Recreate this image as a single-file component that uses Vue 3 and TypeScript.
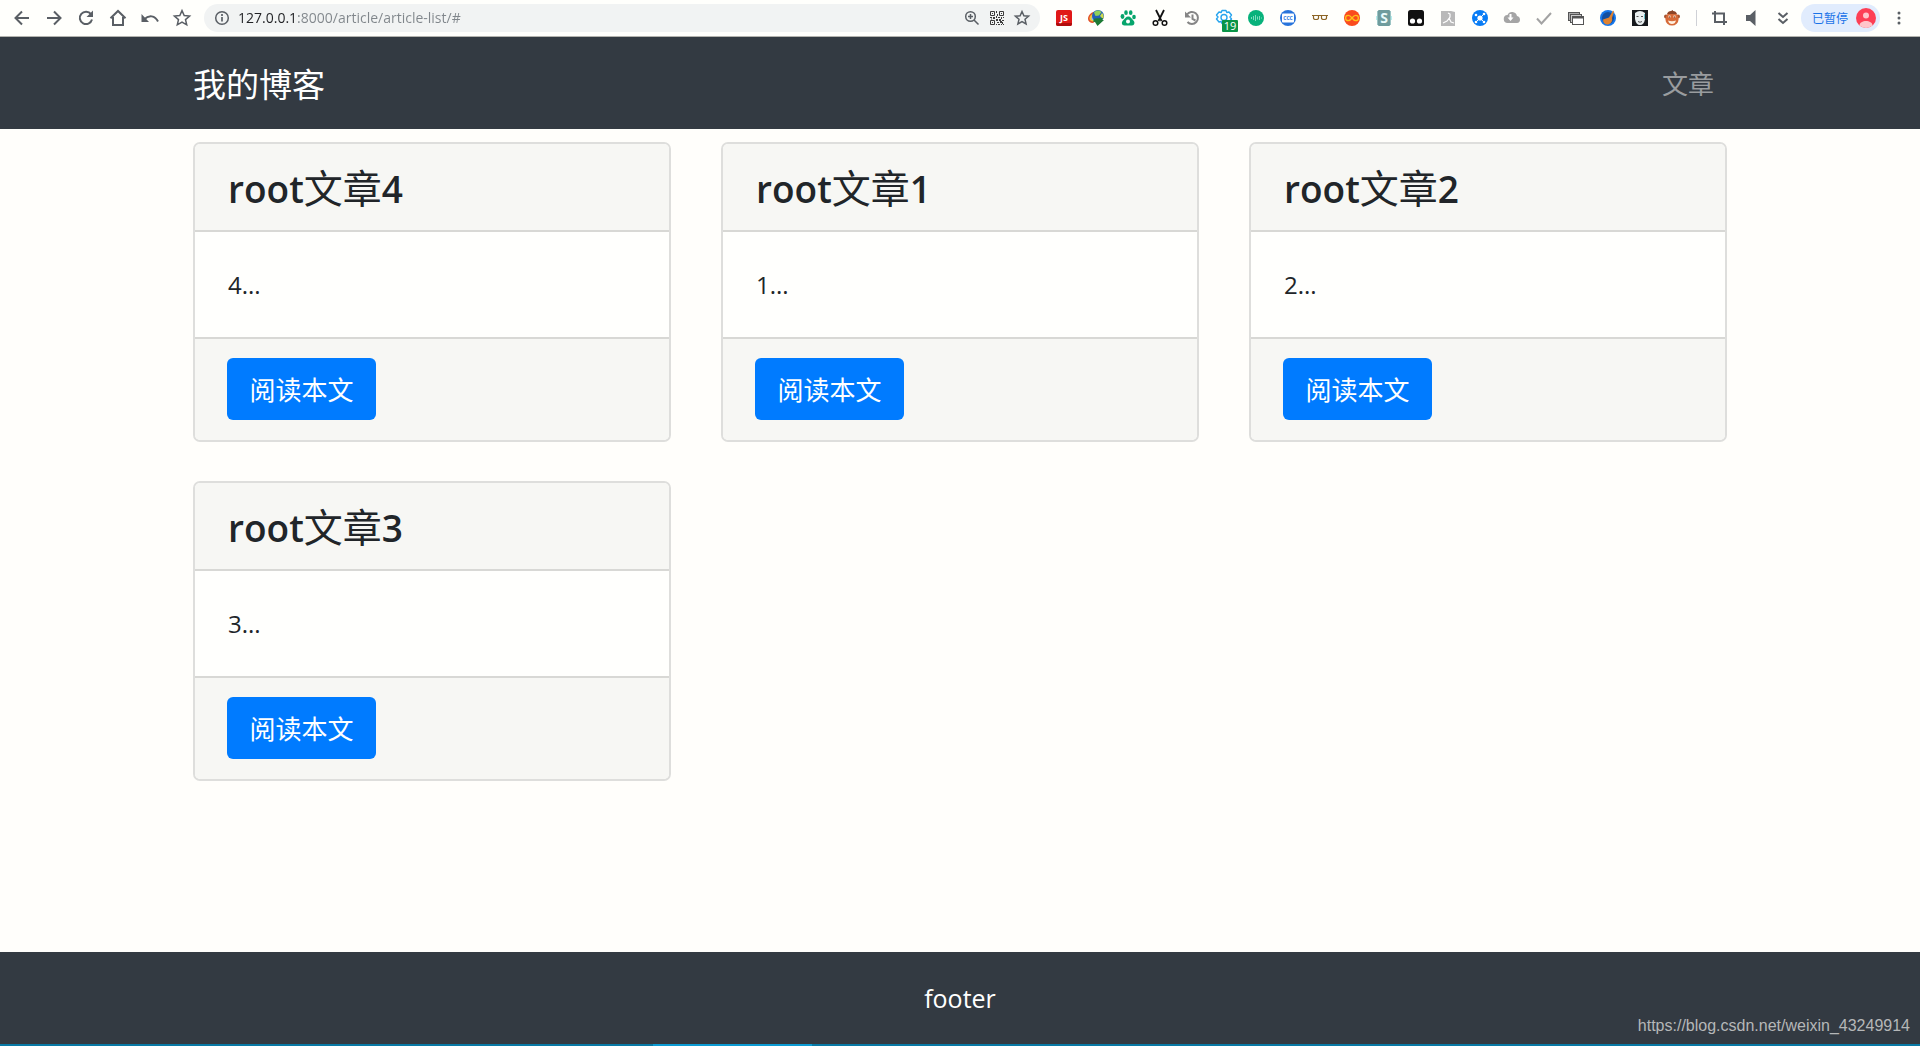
<script setup lang="ts">
import { ref } from 'vue'

interface Tool {
  name: string
  art: string
}

interface Article {
  author: string
  title: string
  number: string
  summary: string
}

const address = ref('127.0.0.1:8000/article/article-list/#')

const line = 'fill="none" stroke="#5a5f65" stroke-width="2"'

const starArt =
  '<path d="M12 4.6l2.2 4.9 5.4.5-4.1 3.6 1.2 5.2-4.7-2.8-4.7 2.8 1.2-5.2-4.1-3.6 5.4-.5z" fill="none" stroke="#5a5f65" stroke-width="1.5"/>'

const smallStarArt =
  '<path d="M12 5.500l1.900 4.300 4.700.400-3.600 3.100 1.100 4.600-4.100-2.400-4.100 2.400 1.100-4.600-3.600-3.100 4.700-.400z" fill="none" stroke="#5a5f65" stroke-width="1.500"/>'

const navTools: Tool[] = [
  { name: '后退', art: `<path d="M19 12H6M12 5.5L5.5 12l6.500 6.500" ${line}/>` },
  { name: '前进', art: `<path d="M5 12h13M12 5.500L18.500 12 12 18.500" ${line}/>` },
  { name: '重新加载', art: `<path d="M17 8.200A6.200 6.200 0 1 0 18 13.500" ${line}/><path d="M19 4.500v6.500h-6.500z" fill="#5a5f65"/>` },
  { name: '主页', art: `<path d="M4.500 12.200L12 5l7.500 7.200M7 11v8h10v-8" ${line}/>` },
  { name: '撤销', art: '<path d="M3.500 8v8h7.500z" fill="#5a5f65"/><path d="M6 13.500c5-5 11-4 14 2" fill="none" stroke="#5a5f65" stroke-width="2"/>' },
  { name: '书签', art: starArt }
]

const pageTools: Tool[] = [
  { name: '缩放', art: '<circle cx="10.500" cy="10.500" r="4.800" fill="none" stroke="#5a5f65" stroke-width="1.500"/><path d="M14 14l4.500 4.500M8 10.500h5M10.500 8v5" fill="none" stroke="#5a5f65" stroke-width="1.500"/>' },
  {
    name: '二维码',
    art: '<path d="M5.500 5.500h4v4h-4zM14.500 5.500h4v4h-4zM5.500 14.500h4v4h-4z" fill="none" stroke="#3c3c3c"/><path d="M7 7h1v1H7zM16 7h1v1h-1zM7 16h1v1H7zM11 5h1v2h-1zM12 8h1v2h-1zM11 10h1v2h-1zM5 11h2v1H5zM8 11h2v2H8zM6 12.500h1v1H6zM13 11h2v1h-2zM16 11h1v2h-1zM18 11h1v1h-1zM11 13h2v2h-2zM14 13h2v2h-2zM17 14h2v1h-2zM12 16h2v1h-2zM15 15h2v2h-2zM11 18h1v1h-1zM13 18h2v1h-2zM17 16h1v2h-1zM18 18h1v1h-1zM16 18h1v1h-1z" fill="#3c3c3c"/>'
  },
  { name: '收藏', art: smallStarArt }
]

const extensions: Tool[] = [
  { name: 'JS', art: '<rect x="4" y="4" width="16" height="16" rx="2" fill="#e01818"/><path d="M4 17h16v1a2 2 0 0 1-2 2H6a2 2 0 0 1-2-2z" fill="#b00c0c"/><text x="12" y="15" font-size="9" font-weight="700" text-anchor="middle" fill="#fff">JS</text>' },
  { name: '下载管理器', art: '<path d="M13 6c-5-1-9 3-9 7 0 2 2 4 5 4l3-2z" fill="#e2532b"/><path d="M13 7c-4-.500-7.500 2.500-7.500 5.500 0 2 2 3 4 3l3-2z" fill="#f3c53a"/><path d="M13 8.500c-3 0-5.500 2-5.500 4 0 1.500 1.500 2 3 2z" fill="#8fc8ee"/><circle cx="14" cy="10" r="6" fill="#2360b8"/><path d="M10 6.500c2-3 6-2.500 7.500-.500l-2.500 3.500-3.500.500z" fill="#8fd15a"/><path d="M18 7c2 1.500 2 4.500 1 6l-3-3z" fill="#cfdc4c"/><path d="M10.500 12.500l8.500-.500-1 2h2l-6.500 6-2.500-4-2-.500z" fill="#1c7a34"/>' },
  { name: '百度', art: '<g fill="#06a56c"><ellipse cx="6.500" cy="10.500" rx="1.900" ry="2.400"/><ellipse cx="10" cy="6.700" rx="1.800" ry="2.400"/><ellipse cx="14.700" cy="6.700" rx="1.800" ry="2.400"/><ellipse cx="18" cy="11" rx="1.800" ry="2.300"/><path d="M12.300 10.500c2.500 0 3 2 4.700 3.500 2.500 2.300 1.500 5.500-1 5.500H8.500c-3 0-3.500-3.500-1-5.500 1.700-1.400 2.300-3.500 4.800-3.500z"/></g><circle cx="12" cy="15.500" r="2" fill="#fff"/>' },
  { name: '剪刀', art: '<path d="M8 4l5.500 11M16 4l-5.500 11" stroke="#111" stroke-width="1.800"/><circle cx="7.500" cy="17" r="2.300" fill="none" stroke="#111" stroke-width="1.500"/><circle cx="16.500" cy="17" r="2.300" fill="none" stroke="#111" stroke-width="1.500"/>' },
  { name: '历史记录', art: '<path d="M7 8.500a6 6 0 1 1 .500 7.500M12.500 8.500V13l3 1.500" fill="none" stroke="#858585" stroke-width="2"/><path d="M5 5.500v6h6z" fill="#858585"/>' },
  { name: '设置', art: '<path d="M10 4.500h4l.800 2 2.200-.500 2.500 3-1.500 2 1.500 2-2.500 3-2.200-.500-.800 2h-4l-.800-2-2.200.500-2.500-3 1.500-2-1.500-2 2.500-3 2.200.500z" fill="none" stroke="#27a4ee" stroke-width="1.400" stroke-linejoin="round"/><circle cx="12" cy="11.500" r="3" fill="none" stroke="#27a4ee" stroke-width="1.400"/><rect x="10" y="14" width="16" height="12" rx="1" fill="#0a9447"/><text x="18" y="24" font-size="11" text-anchor="middle" fill="#fff">19</text>' },
  { name: '音频', art: '<circle cx="12" cy="12" r="8" fill="#08b27b"/><path d="M7.500 11v2M9.500 10v4M11.500 9v6M13.500 10.500v3M15.500 10v4M17.500 11.500v1" stroke="#7fdcbd"/>' },
  { name: 'CCC', art: '<circle cx="12" cy="12" r="8" fill="#2874dc"/><rect x="6" y="7.500" width="12" height="9" rx="1" fill="#fff"/><text x="12" y="14" font-size="5" font-weight="700" text-anchor="middle" fill="#2874dc">CCC</text>' },
  { name: '眼镜', art: '<path d="M4 9.500h16M5.500 9.500v2.500q0 1.500 2.500 1.500t2.500-1.500V9.500M13.500 9.500v2.500q0 1.500 2.500 1.500t2.500-1.500V9.500" fill="none" stroke="#8d6526" stroke-width="1.200"/>' },
  { name: '无限', art: '<circle cx="12" cy="12" r="8" fill="#fa4b1e"/><path d="M12 12c-1.500-2-2.500-2.700-3.700-2.700a2.700 2.700 0 0 0 0 5.400c1.200 0 2.200-.7 3.700-2.700s2.500-2.700 3.700-2.700a2.700 2.700 0 0 1 0 5.400c-1.200 0-2.200-.7-3.700-2.700z" fill="none" stroke="#ffc219" stroke-width="1.300"/>' },
  { name: 'S', art: '<rect x="6" y="4" width="12" height="16" rx="1" fill="#6f9c9d"/><path d="M5.500 5v14M18.500 5v14" stroke="#9cc4c4"/><path d="M4.500 10v4M19.500 10v4" stroke="#b6efee"/><text x="12" y="17" font-size="14" font-weight="700" text-anchor="middle" fill="#eafafa">S</text>' },
  { name: '脚本管理', art: '<rect x="4" y="4" width="16" height="16" rx="2.500" fill="#111"/><circle cx="8.500" cy="15" r="2.600" fill="#fff"/><circle cx="15.500" cy="15" r="2.600" fill="#fff"/>' },
  { name: '阅读', art: '<path d="M5 5h10l4 1v14H5z" fill="#b9b9b9"/><path d="M12 7l2 1v3l-3 4-4 2M13 12l2 4 3 1" fill="none" stroke="#fff" stroke-width="1.200"/>' },
  { name: '网络', art: '<circle cx="12" cy="12" r="8" fill="#087cf5"/><circle cx="12" cy="12" r="2.600" fill="#fff"/><path d="M12 12l4-4M12 12l-4 4M12 12l4 4" stroke="#fff"/><circle cx="8" cy="9" r="1.300" fill="#fff"/><circle cx="16" cy="8" r="1.300" fill="#fff"/><circle cx="8" cy="16" r="1.300" fill="#fff"/><circle cx="16" cy="16" r="1.300" fill="#fff"/>' },
  { name: '云下载', art: '<path d="M8 17a4 4 0 0 1-.500-8 5 5 0 0 1 9.500 1c4 .500 4 7 0 7z" fill="#a5a5a5"/><path d="M9.500 8h2v3.500h2L10.500 15l-3-3.500h2z" fill="#fff"/>' },
  { name: '检查', art: '<path d="M5 12.500l4.500 5L19 7" fill="none" stroke="#a3a3a3" stroke-width="2"/>' },
  { name: '窗口', art: '<rect x="4.500" y="6.500" width="11" height="8" fill="#aaa" stroke="#555"/><rect x="6.500" y="8.500" width="11" height="8" fill="#ccc" stroke="#555"/><rect x="8.500" y="10.500" width="11" height="8" fill="#fff" stroke="#555"/><path d="M8 11.500h12" stroke="#555" stroke-width="2"/>' },
  { name: '清理', art: '<circle cx="12" cy="12" r="8" fill="#1677ea"/><circle cx="12" cy="12" r="6" fill="#134f9f"/><path d="M17 4.500l1 1-2 6.500c1 4-2 6.500-5 6.500-2.500-.500-4-2-4-5l6-2z" fill="#df8230"/>' },
  { name: '面具', art: '<rect x="4" y="4" width="16" height="16" fill="#16191c"/><path d="M7 7q5-4 10 0v6q-1 6-5 6t-5-6z" fill="#e9eff0"/><path d="M8.500 10.500h2M13 10.500h2M10 15.500q2 1.500 4 0" stroke="#555" fill="none"/><path d="M16.500 8v5" stroke="#67bcc5"/>' },
  { name: '小猴', art: '<circle cx="6" cy="10.500" r="2" fill="#a65430"/><circle cx="18" cy="10.500" r="2" fill="#a65430"/><circle cx="12" cy="13" r="6.600" fill="#d66a38"/><path d="M7 8q1-3 4-3l2-1v1q3 0 4 3z" fill="#8d4426"/><path d="M8.500 10.500h2M13.500 10.500h2" stroke="#fff0df" stroke-width="2"/><path d="M9 11h1M14 11h1" stroke="#4d2718"/><path d="M8 14.500q4 1.500 8 0-1 3.500-4 3.500t-4-3.500z" fill="#fff0df"/>' }
]

const windowTools: Tool[] = [
  { name: '截图', art: `<path d="M8 5v11h12M5 7.500h12v11.500" ${line}/>` },
  { name: '静音', art: '<path d="M7 9h4l5.500-5v16L11 15H7z" fill="#5a5f65"/>' },
  { name: '更多扩展', art: `<path d="M7.500 7l4.500 4 4.500-4M7.500 13l4.500 4 4.500-4" ${line}/>` }
]

const articles: Article[] = [
  { author: 'root', title: '文章', number: '4', summary: '4...' },
  { author: 'root', title: '文章', number: '1', summary: '1...' },
  { author: 'root', title: '文章', number: '2', summary: '2...' },
  { author: 'root', title: '文章', number: '3', summary: '3...' }
]
</script>

<template>
  <div class="page">
    <header class="toolbar">
      <div class="tools">
        <button v-for="tool in navTools" :key="tool.name" class="tool" type="button" :aria-label="tool.name">
          <svg class="icon" viewBox="0 0 24 24" v-html="tool.art"></svg>
        </button>
      </div>
      <div class="address">
        <svg class="icon" viewBox="0 0 24 24">
          <circle cx="12" cy="12" r="6.300" fill="none" stroke="#5a5f65" stroke-width="1.500" />
          <path d="M12 11v4.500M12 8v2" stroke="#5a5f65" stroke-width="1.700" />
        </svg>
        <input v-model="address" class="address-input" type="text" aria-label="地址" spellcheck="false" />
        <button v-for="tool in pageTools" :key="tool.name" class="tool compact" type="button" :aria-label="tool.name">
          <svg class="icon" viewBox="0 0 24 24" v-html="tool.art"></svg>
        </button>
      </div>
      <div class="tools">
        <button v-for="tool in extensions" :key="tool.name" class="tool" type="button" :aria-label="tool.name">
          <svg class="icon" viewBox="0 0 24 24" v-html="tool.art"></svg>
        </button>
      </div>
      <span class="divider"></span>
      <div class="tools">
        <button v-for="tool in windowTools" :key="tool.name" class="tool" type="button" :aria-label="tool.name">
          <svg class="icon" viewBox="0 0 24 24" v-html="tool.art"></svg>
        </button>
      </div>
      <button class="profile" type="button">
        <span>已暂停</span>
        <svg class="avatar" viewBox="0 0 20 20">
          <circle cx="10" cy="10" r="10" fill="#fd3f55" />
          <circle cx="10" cy="7.500" r="3" fill="#ffc5ca" />
          <path d="M3.500 17.500c0-6 13-6 13 0a10 10 0 0 1-13 0z" fill="#ffc5ca" />
        </svg>
      </button>
      <button class="tool" type="button" aria-label="菜单">
        <svg class="icon" viewBox="0 0 24 24" fill="#5a5f65">
          <circle cx="12" cy="7" r="1.500" />
          <circle cx="12" cy="12" r="1.500" />
          <circle cx="12" cy="17" r="1.500" />
        </svg>
      </button>
    </header>

    <nav class="navbar">
      <div class="container navbar-row">
        <a class="brand" href="#">我的博客</a>
        <a class="nav-link" href="#">文章</a>
      </div>
    </nav>

    <main class="container articles">
      <article v-for="article in articles" :key="article.number" class="card">
        <h4 class="card-title"><span class="latin">{{ article.author }}</span>{{ article.title }}<span class="latin">{{ article.number }}</span></h4>
        <p class="card-body">{{ article.summary }}</p>
        <div class="card-footer">
          <button class="read" type="button">阅读本文</button>
        </div>
      </article>
    </main>

    <footer class="footer">
      <span>footer</span>
      <span class="watermark">https://blog.csdn.net/weixin_43249914</span>
    </footer>
    <div class="taskbar"></div>
  </div>
</template>

<style>
body {
  margin: 0;
  background: #fffefb;
}
</style>

<style scoped>
.page {
  display: flex;
  flex-direction: column;
  min-height: 100vh;
  color: #212529;
  font-family: "Open Sans", "Noto Sans CJK SC", sans-serif;
}

button,
input {
  margin: 0;
  padding: 0;
  border: 0;
  background: none;
  font-family: inherit;
}

.toolbar {
  display: flex;
  align-items: center;
  height: 36px;
  padding: 0 5px 0 6px;
  border-bottom: 1px solid #b3b3ae;
  background: #fffffc;
}

.tools {
  display: flex;
}

.tool {
  display: flex;
  flex: none;
  align-items: center;
  justify-content: center;
  width: 32px;
  height: 28px;
}

.compact {
  width: 25px;
}

.icon {
  display: block;
  flex: none;
  width: 24px;
  height: 24px;
  overflow: visible;
}

.address {
  display: flex;
  flex: 1;
  align-items: center;
  min-width: 0;
  height: 28px;
  margin: 0 8px 0 6px;
  padding: 0 5px 0 6px;
  border-radius: 14px;
  background: #f1f3f3;
}

.address-input {
  flex: 1;
  min-width: 0;
  margin-left: 4px;
  background: linear-gradient(90deg, #202124 59px, #80868b 59px);
  background-clip: text;
  color: transparent;
  font-size: 14px;
  line-height: 20px;
  outline: none;
}

.divider {
  width: 1px;
  height: 16px;
  margin: 0 6px 0 8px;
  background: #cfd1d6;
}

.profile {
  display: flex;
  align-items: center;
  gap: 8px;
  height: 28px;
  margin: 0 3px 0 2px;
  padding: 0 4px 0 11px;
  border-radius: 14px;
  background: #e1ecfd;
  color: #1a73e8;
  font-size: 12px;
}

.avatar {
  width: 20px;
  height: 20px;
}

.container {
  box-sizing: border-box;
  width: 100%;
  max-width: 1574px;
  margin: 0 auto;
  padding: 0 20px;
}

.navbar {
  background: #333a42;
}

.navbar-row {
  display: flex;
  align-items: center;
  justify-content: space-between;
  height: 92px;
}

.brand {
  color: #fff;
  font-size: 33px;
  text-decoration: none;
}

.nav-link {
  padding: 0 13px;
  color: #999c9f;
  font-size: 26px;
  text-decoration: none;
}

.articles {
  display: grid;
  flex: 1;
  grid-template-columns: repeat(3, 1fr);
  align-content: start;
  gap: 39px 50px;
  padding-top: 13px;
  padding-bottom: 39px;
}

.card {
  overflow: hidden;
  border: 2px solid #dededc;
  border-radius: 7px;
  background: #fffffd;
}

.card-title {
  margin: 0;
  padding: 18px 33px 16px;
  border-bottom: 2px solid #d8d8d5;
  background: #f7f7f4;
  font-size: 39px;
  font-weight: 400;
  line-height: 52px;
}

.latin {
  font-size: 37px;
  font-weight: 600;
  line-height: 1;
}

.card-body {
  margin: 0;
  padding: 33px 33px 32px;
  font-size: 24px;
  line-height: 40px;
}

.card-footer {
  padding: 19px 32px 20px;
  border-top: 2px solid #d8d8d5;
  background: #f7f7f4;
}

.read {
  display: block;
  min-width: 149px;
  height: 62px;
  padding: 0 22px;
  border-radius: 6px;
  background: #007bff;
  color: #fff;
  font-size: 26px;
}

.footer {
  position: relative;
  display: flex;
  align-items: center;
  justify-content: center;
  height: 92px;
  background: #333a42;
  color: #fff;
  font-size: 25px;
}

.watermark {
  position: absolute;
  right: 10px;
  bottom: 8px;
  color: #b5b7b8;
  font-family: "Liberation Sans", Arial, sans-serif;
  font-size: 16px;
  line-height: 20px;
}

.taskbar {
  height: 2px;
  background: linear-gradient(90deg, #0879a5 34%, #0c9bd3 34%, #0c9bd3 42.3%, #0879a5 42.3%);
}
</style>
